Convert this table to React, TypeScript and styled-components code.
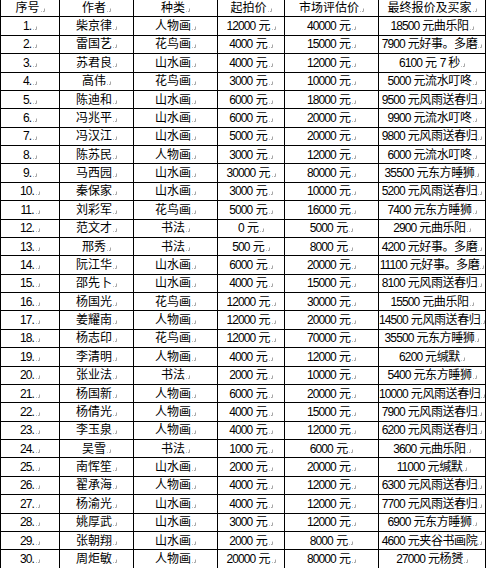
import React from "react";
import styled, { createGlobalStyle } from "styled-components";

const GlobalStyle = createGlobalStyle`
  html, body { margin: 0; padding: 0; background: #fff; }
  body { overflow: hidden; }
`;

const Table = styled.table`
  width: 485px;
  margin-top: -2px;
  border-collapse: collapse;
  table-layout: fixed;
  font-family: "Liberation Sans", "Noto Sans CJK SC", sans-serif;
  font-size: 12px;
  color: #000;
`;

const Row = styled.tr`
  height: 18.38px;
`;

const HeadCell = styled.th`
  border: 1px solid #000;
  padding: 0;
  font-weight: normal;
  text-align: center;
  vertical-align: middle;
  line-height: 14px;
  white-space: nowrap;
`;

const Cell = styled.td<{ $tight?: boolean }>`
  border: 1px solid #000;
  padding: 0;
  text-align: center;
  vertical-align: middle;
  line-height: 14px;
  white-space: nowrap;
  letter-spacing: ${(p) => (p.$tight ? "-0.4px" : "0")};
`;

const Num = styled.span`
  letter-spacing: -0.9px;
`;

const MarkSvg = styled.svg`
  display: inline-block;
  width: 4px;
  height: 4px;
  margin-left: 1px;
  vertical-align: baseline;
`;

const CellMark = () => (
  <MarkSvg viewBox="0 0 4 4">
    <path d="M3.5 0.5 V3.5 H2" stroke="#a8a8a8" strokeWidth="1" fill="none" />
    <rect x="0" y="3" width="1" height="1" fill="#c0c0c0" />
  </MarkSvg>
);

const Text = ({ value }: { value: string }) => (
  <>
    {value.split(/(\d+)/).map((part, i) =>
      /^\d+$/.test(part) ? <Num key={i}>{part}</Num> : part
    )}
    <CellMark />
  </>
);

const widths = [59, 74, 84, 67, 94, 107];
const headers = ["序号", "作者", "种类", "起拍价", "市场评估价", "最终报价及买家"];

const rows: string[][] = [
  ["柴京律", "人物画", "12000", "40000", "18500 元曲乐阳"],
  ["雷国艺", "花鸟画", "4000", "15000", "7900 元好事。多磨"],
  ["苏君良", "山水画", "4000", "12000", "6100 元 7 秒"],
  ["高伟", "花鸟画", "3000", "10000", "5000 元流水叮咚"],
  ["陈迪和", "山水画", "6000", "18000", "9500 元风雨送春归"],
  ["冯兆平", "山水画", "6000", "20000", "9900 元流水叮咚"],
  ["冯汉江", "山水画", "5000", "20000", "9800 元风雨送春归"],
  ["陈苏民", "人物画", "3000", "12000", "6000 元流水叮咚"],
  ["马西园", "山水画", "30000", "80000", "35500 元东方睡狮"],
  ["秦保家", "山水画", "3000", "10000", "5200 元风雨送春归"],
  ["刘彩军", "花鸟画", "5000", "16000", "7400 元东方睡狮"],
  ["范文才", "书法", "0", "5000", "2900 元曲乐阳"],
  ["邢秀", "书法", "500", "8000", "4200 元好事。多磨"],
  ["阮江华", "山水画", "6000", "20000", "11100 元好事。多磨"],
  ["邵先卜", "山水画", "4000", "15000", "8100 元风雨送春归"],
  ["杨国光", "花鸟画", "12000", "30000", "15500 元曲乐阳"],
  ["姜耀南", "人物画", "12000", "20000", "14500 元风雨送春归"],
  ["杨志印", "花鸟画", "12000", "70000", "35500 元东方睡狮"],
  ["李清明", "人物画", "4000", "12000", "6200 元缄默"],
  ["张业法", "书法", "2000", "10000", "5400 元东方睡狮"],
  ["杨国新", "人物画", "6000", "20000", "10000 元风雨送春归"],
  ["杨倩光", "人物画", "4000", "15000", "7900 元风雨送春归"],
  ["李玉泉", "人物画", "4000", "12000", "6200 元风雨送春归"],
  ["吴雪", "书法", "1000", "6000", "3600 元曲乐阳"],
  ["南恽笙", "山水画", "2000", "20000", "11000 元缄默"],
  ["翟承海", "人物画", "4000", "12000", "6300 元风雨送春归"],
  ["杨渝光", "山水画", "4000", "12000", "7700 元风雨送春归"],
  ["姚厚武", "山水画", "3000", "12000", "6900 元东方睡狮"],
  ["张朝翔", "山水画", "2000", "8000", "4600 元夹谷书画院"],
  ["周炬敏", "人物画", "20000", "80000", "27000 元杨赟"],
];

export default function App() {
  return (
    <>
      <GlobalStyle />
      <Table>
        <colgroup>
          {widths.map((w, i) => (
            <col key={i} style={{ width: w }} />
          ))}
        </colgroup>
        <thead>
          <Row>
            {headers.map((h) => (
              <HeadCell key={h}>
                <Text value={h} />
              </HeadCell>
            ))}
          </Row>
        </thead>
        <tbody>
          {rows.map((r, i) => (
            <Row key={i}>
              <Cell>
                <Text value={`${i + 1}.`} />
              </Cell>
              <Cell>
                <Text value={r[0]} />
              </Cell>
              <Cell>
                <Text value={r[1]} />
              </Cell>
              <Cell>
                <Text value={`${r[2]} 元`} />
              </Cell>
              <Cell>
                <Text value={`${r[3]} 元`} />
              </Cell>
              <Cell $tight>
                <Text value={r[4]} />
              </Cell>
            </Row>
          ))}
        </tbody>
      </Table>
    </>
  );
}
